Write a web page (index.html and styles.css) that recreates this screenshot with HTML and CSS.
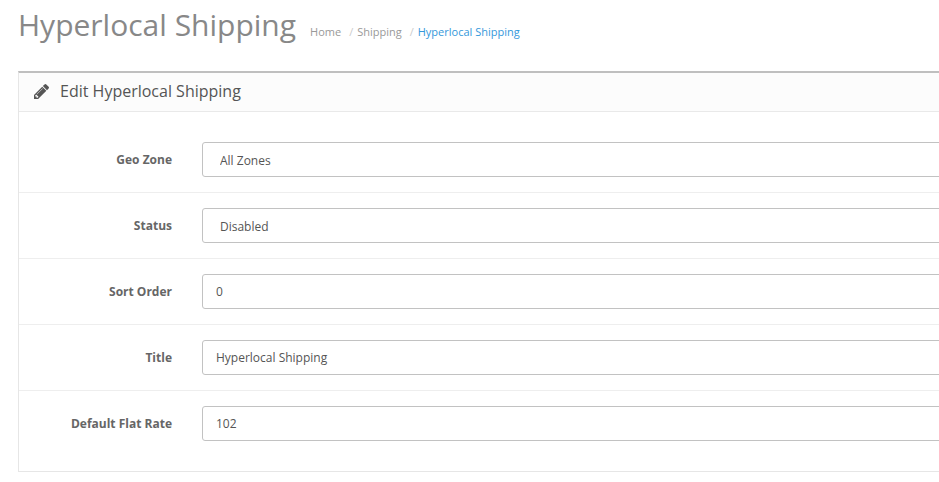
FILE: index.html
```html
<!DOCTYPE html>
<html lang="en">
<head>
<meta charset="utf-8">
<title>Hyperlocal Shipping</title>
<link rel="stylesheet" href="styles.css">
</head>
<body>
<header class="page-head">
  <h1 class="page-title">Hyperlocal Shipping</h1>
  <ol class="crumbs">
    <li class="crumb"><a class="crumb-link" href="#">Home</a></li>
    <li class="crumb crumb-sep">/</li>
    <li class="crumb"><a class="crumb-link" href="#">Shipping</a></li>
    <li class="crumb crumb-sep">/</li>
    <li class="crumb"><a class="crumb-link crumb-current" href="#">Hyperlocal Shipping</a></li>
  </ol>
</header>
<section class="panel">
  <div class="panel-head">
    <svg class="pencil" viewBox="0 0 1515 1515" aria-hidden="true"><path d="M363 1387l91-91-235-235-91 91v107h128v128h107zm523-928q0-22-22-22-10 0-17 7l-542 542q-7 7-7 17 0 22 22 22 10 0 17-7l542-542q7-7 7-17zm-54-192l416 416-832 832H0v-416zm683 96q0 53-37 90l-166 166-416-416 166-165q36-38 90-38 53 0 91 38l235 234q37 39 37 91z"/></svg>
    <h2 class="panel-title">Edit Hyperlocal Shipping</h2>
  </div>
  <form class="panel-body">
    <div class="row row-first">
      <label class="label" for="geo">Geo Zone</label>
      <select class="control control-select" id="geo"><option>All Zones</option></select>
    </div>
    <div class="row">
      <label class="label" for="status">Status</label>
      <select class="control control-select" id="status"><option>Disabled</option></select>
    </div>
    <div class="row">
      <label class="label" for="sort">Sort Order</label>
      <input class="control" id="sort" value="0">
    </div>
    <div class="row">
      <label class="label" for="title">Title</label>
      <input class="control" id="title" value="Hyperlocal Shipping">
    </div>
    <div class="row row-last">
      <label class="label" for="rate">Default Flat Rate</label>
      <input class="control" id="rate" value="102">
    </div>
  </form>
</section>
</body>
</html>
```
FILE: styles.css
```css
* { box-sizing: border-box; }
html, body { height: 100%; }
body {
  margin: 0;
  overflow: hidden;
  background: #fff;
  font-family: "Open Sans", sans-serif;
  font-size: 12px;
  color: #555;
}
.page-head {
  display: flex;
  align-items: center;
  height: 71px;
  padding: 0 0 22px 18px;
}
.page-title {
  margin: 0;
  font-size: 30px;
  font-weight: 400;
  line-height: 40px;
  color: #888;
  white-space: nowrap;
}
.crumbs {
  display: flex;
  gap: 4px;
  margin: 15px 0 0 14px;
  padding: 0;
  list-style: none;
  font-size: 11px;
  line-height: 18px;
}
.crumb-sep { margin-left: 4px; color: #ccc; }
.crumb-link { color: #999; text-decoration: none; }
.crumb-current { color: #3498db; }
.panel {
  width: 1000px;
  margin-left: 18px;
  border: 1px solid #e6e6e6;
  border-top: 2px solid #bfbfbf;
}
.panel-head {
  display: flex;
  align-items: center;
  height: 39px;
  padding: 0 0 2px 15px;
  background: #fcfcfc;
  border-bottom: 1px solid #e9e9e9;
}
.pencil { width: 15px; height: 15px; fill: #555; flex: none; }
.panel-title {
  margin: 0 0 0 11px;
  font-size: 16px;
  font-weight: 400;
  line-height: 20px;
  color: #555;
}
.row {
  display: flex;
  align-items: center;
  padding: 15px 0;
  border-bottom: 1px solid #eee;
}
.row-first { padding-top: 30px; }
.row-last { padding-bottom: 30px; border-bottom: 0; }
.label {
  flex: none;
  width: 153px;
  margin-right: 30px;
  text-align: right;
  font-weight: 700;
  color: #666;
}
.control {
  flex: none;
  width: 800px;
  height: 35px;
  padding: 6px 13px;
  background: #fff;
  border: 1px solid #c2c2c2;
  border-radius: 3px;
  font-family: inherit;
  font-size: 12px;
  color: #555;
  outline: 0;
}
.control-select { appearance: none; padding: 8px 13px 6px 17px; }
```
